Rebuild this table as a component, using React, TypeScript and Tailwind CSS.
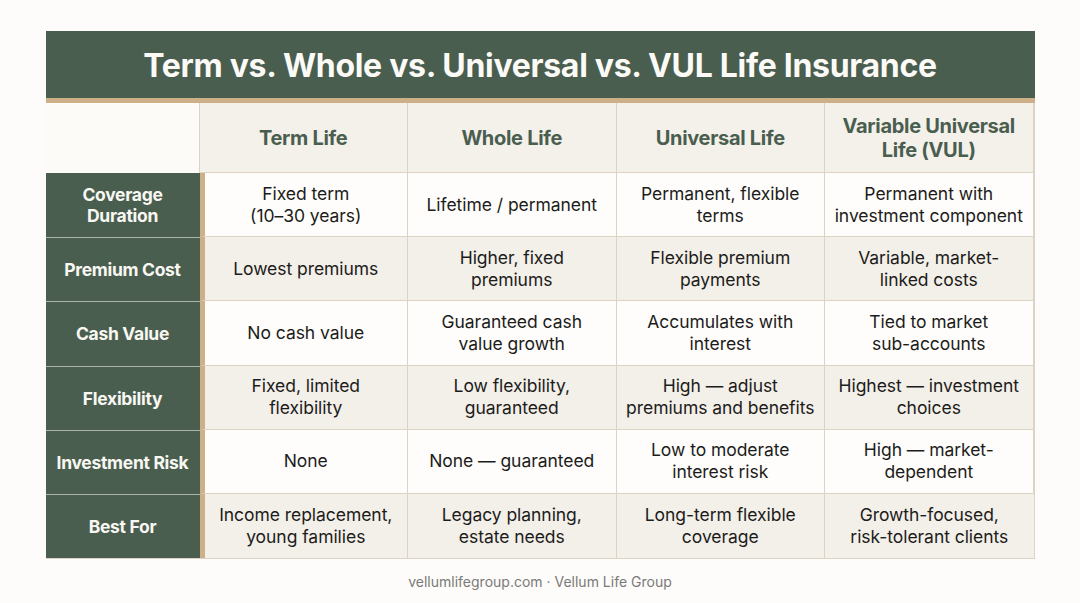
import React from 'react';

const columns = ['Term Life', 'Whole Life', 'Universal Life', 'Variable Universal\nLife (VUL)'];

const rows: { label: string; cells: string[] }[] = [
    {
        label: 'Coverage\nDuration',
        cells: ['Fixed term\n(10–30 years)', 'Lifetime / permanent', 'Permanent, flexible\nterms', 'Permanent with\ninvestment component'],
    },
    {
        label: 'Premium Cost',
        cells: ['Lowest premiums', 'Higher, fixed\npremiums', 'Flexible premium\npayments', 'Variable, market-\nlinked costs'],
    },
    {
        label: 'Cash Value',
        cells: ['No cash value', 'Guaranteed cash\nvalue growth', 'Accumulates with\ninterest', 'Tied to market\nsub-accounts'],
    },
    {
        label: 'Flexibility',
        cells: ['Fixed, limited\nflexibility', 'Low flexibility,\nguaranteed', 'High — adjust\npremiums and benefits', 'Highest — investment\nchoices'],
    },
    {
        label: 'Investment Risk',
        cells: ['None', 'None — guaranteed', 'Low to moderate\ninterest risk', 'High — market-\ndependent'],
    },
    {
        label: 'Best For',
        cells: ['Income replacement,\nyoung families', 'Legacy planning,\nestate needs', 'Long-term flexible\ncoverage', 'Growth-focused,\nrisk-tolerant clients'],
    },
];

const App = () => {
    return (
        <div
            className="min-h-[603px] w-full bg-[#fdfcfa] pt-[31px]"
            style={{ fontFamily: 'Inter, "Noto Sans", sans-serif' }}
        >
            <div className="mx-auto w-[989px]">
                <div className="flex h-[67px] items-center justify-center bg-[#4a5e50] pt-[3px]">
                    <h1 className="text-[32px] font-bold tracking-[-0.3px] text-[#fbfaf6]">
                        Term vs. Whole vs. Universal vs. VUL Life Insurance
                    </h1>
                </div>
                <div className="h-[5px] bg-[#cdb088]" />

                <div className="grid grid-cols-[154px_repeat(4,1fr)] grid-rows-[70px_repeat(6,64.2px)] border-r border-b border-[#ddd3c4]">
                    <div className="border-r border-[#ddd3c4] bg-[#fdfbf8]" />
                    {columns.map((c) => (
                        <div
                            key={c}
                            className="flex items-center justify-center whitespace-pre-line border-r border-b border-[#ddd3c4] bg-[#f4f0ea] px-1 text-center text-[20px] leading-[24px] font-bold tracking-[-0.3px] text-[#4a5e50] last:border-r-0"
                        >
                            {c}
                        </div>
                    ))}

                    {rows.map((r, i) => (
                        <React.Fragment key={r.label}>
                            <div
                                className={`flex items-center justify-center whitespace-pre-line bg-[#4a5e50] px-1 text-center text-[17.5px] leading-[21px] font-bold tracking-[-0.3px] text-[#f8f7f2] ${i > 0 ? 'border-t border-t-[#aab4ab]' : ''}`}
                            >
                                {r.label}
                            </div>
                            {r.cells.map((cell, j) => (
                                <div
                                    key={j}
                                    className={`flex items-center justify-center whitespace-pre-line border-r border-b border-[#ddd3c4] px-1 text-center text-[17.5px] leading-[22px] tracking-[-0.05px] text-[#1c1c1a] last:border-r-0 ${j === 0 ? 'border-l-[5px] border-l-[#cdb088]' : ''} ${i % 2 === 0 ? 'bg-[#fefdfb]' : 'bg-[#f3efe9]'} ${i === rows.length - 1 ? 'border-b-0' : ''}`}
                                >
                                    {cell}
                                </div>
                            ))}
                        </React.Fragment>
                    ))}
                </div>

                <p className="mt-[12px] text-center text-[14px] text-[#7a7a78]">
                    vellumlifegroup.com · Vellum Life Group
                </p>
            </div>
        </div>
    );
};

export default App;
